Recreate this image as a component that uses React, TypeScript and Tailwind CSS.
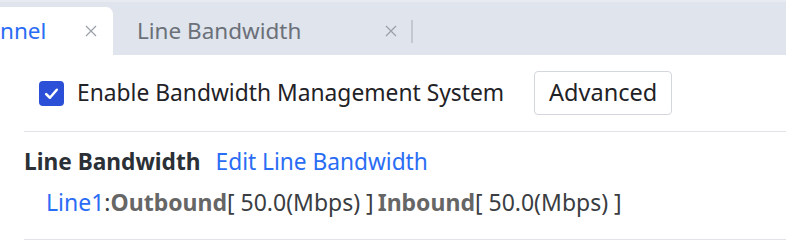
import React from "react";

function CloseX({ className }: { className?: string }) {
  return (
    <svg viewBox="0 0 12 12" className={className} width="12" height="12" fill="none" stroke="currentColor" strokeWidth="1.2">
      <path d="M1 1L11 11M11 1L1 11" />
    </svg>
  );
}

export default function App() {
  return (
    <div className="w-[786px] h-[242px] bg-white overflow-hidden" style={{ fontFamily: '"Noto Sans", "Open Sans", sans-serif' }}>
      <div className="h-[55px] bg-[#dfe4ed] flex items-end border-t-2 border-[#e8ebf1]">
        <div className="w-[113px] h-[48px] bg-white rounded-tr-[7px] flex items-center justify-between pr-[16px]">
          <span className="text-[22.5px] text-[#2a6df4] leading-none">nnel</span>
          <CloseX className="text-[#9aa0a8]" />
        </div>
        <div className="w-[284px] h-[48px] flex items-center justify-between pl-[24px]">
          <span className="text-[22.5px] text-[#6b7079] leading-none">Line Bandwidth</span>
          <CloseX className="text-[#9aa0a8]" />
        </div>
        <div className="mb-[12px] ml-[14px] w-[2px] h-[23px] bg-[#c3c8d0]" />
      </div>
      <div className="pt-[16px] pb-[16px] pl-[39px] flex items-center">
        <span className="w-[25px] h-[25px] rounded-[4px] bg-[#2b4fd6] flex items-center justify-center">
          <svg viewBox="0 0 16 16" width="17" height="17" fill="none" stroke="white" strokeWidth="2.4" strokeLinecap="round" strokeLinejoin="round">
            <path d="M3 8.5L6.5 12L13 4.5" />
          </svg>
        </span>
        <span className="ml-[13px] text-[22.8px] text-[#1f2226] leading-none">Enable Bandwidth Management System</span>
        <button className="ml-[30px] w-[138px] h-[44px] border border-[#d3d6dc] rounded-[4px] bg-white text-[23.5px] text-[#1f2226] leading-none">Advanced</button>
      </div>
      <div className="ml-[24px] border-t border-[#e2e3e8]" />
      <div className="pl-[24px] pt-[17px] h-[107px] flex flex-col gap-[14px]">
        <div className="flex items-center text-[22.7px] leading-[26px]">
          <span className="font-bold text-[#2b2f36]">Line Bandwidth</span>
          <span className="ml-[15px] text-[#2a6df4]">Edit Line Bandwidth</span>
        </div>
        <div className="pl-[22px] flex items-center text-[23px] leading-[26px] text-[#3a3d42]">
          <span className="text-[#2a6df4]">Line1</span>
          <span>:</span>
          <span className="font-bold text-[#666]">Outbound</span>
          <span>[ 50.0(Mbps) ]</span>
          <span className="ml-[4px] font-bold text-[#666]">Inbound</span>
          <span>[ 50.0(Mbps) ]</span>
        </div>
      </div>
      <div className="ml-[24px] border-t border-[#e2e3e8]" />
    </div>
  );
}
